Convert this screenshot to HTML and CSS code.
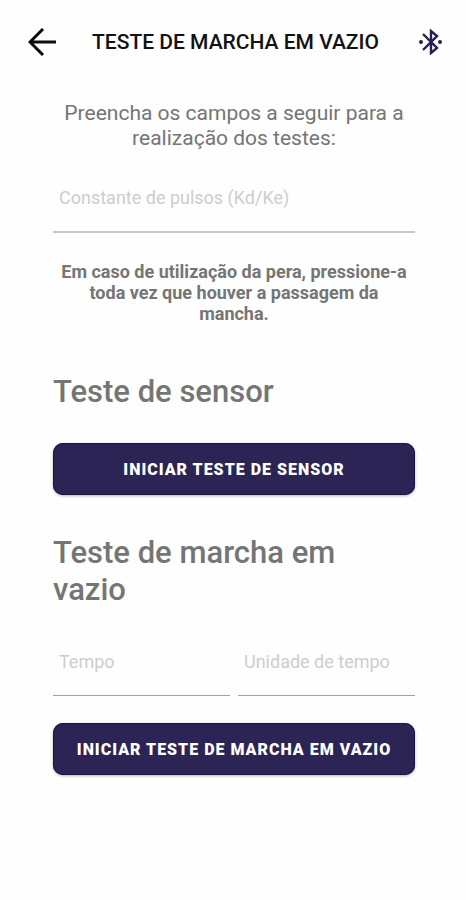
FILE: index.html
```html
<!DOCTYPE html>
<html lang="pt-BR">
<head>
<meta charset="utf-8">
<meta name="viewport" content="width=device-width, initial-scale=1">
<title>Teste de marcha em vazio</title>
<link rel="stylesheet" href="styles.css">
</head>
<body>
<header class="topbar">
  <button class="icon-button" type="button" aria-label="Voltar">
    <svg class="icon-back" viewBox="0 0 28 28" aria-hidden="true"><path d="M28 14H2M15 1 2 14l13 13"/></svg>
  </button>
  <h1 class="title">TESTE DE MARCHA EM VAZIO</h1>
  <button class="icon-button" type="button" aria-label="Bluetooth">
    <svg class="icon-bluetooth" viewBox="0 0 24 26" aria-hidden="true">
      <path d="M4 5 18 19 12 24V2l6 5L4 21"/>
      <circle cx="2" cy="13" r="2"/><circle cx="21" cy="13" r="2"/>
    </svg>
  </button>
</header>
<main>
  <form class="content">
    <p class="intro">Preencha os campos a seguir para a realização dos testes:</p>
    <input class="field field-main" type="text" aria-label="Constante de pulsos (Kd/Ke)" placeholder="Constante de pulsos (Kd/Ke)">
    <p class="notice">Em caso de utilização da pera, pressione-a toda vez que houver a passagem da mancha.</p>
    <section class="test test-sensor">
      <h2 class="heading">Teste de sensor</h2>
      <button class="action" type="button">INICIAR TESTE DE SENSOR</button>
    </section>
    <section class="test test-idle">
      <h2 class="heading">Teste de marcha em vazio</h2>
      <div class="field-row">
        <input class="field" type="text" aria-label="Tempo" placeholder="Tempo">
        <input class="field" type="text" aria-label="Unidade de tempo" placeholder="Unidade de tempo">
      </div>
      <button class="action" type="button">INICIAR TESTE DE MARCHA EM VAZIO</button>
    </section>
  </form>
</main>
</body>
</html>
```
FILE: styles.css
```css
* {
  box-sizing: border-box;
}

body {
  margin: 0;
  background: #fefefe;
  color: #757575;
  font-family: Roboto, sans-serif;
}

h1, h2, p {
  margin: 0;
}

.topbar {
  display: grid;
  grid-template-columns: 1fr auto 1fr;
  align-items: center;
  height: 84px;
  padding: 0 23px 0 28px;
}

.icon-button {
  display: flex;
  justify-self: start;
  padding: 0;
  border: 0;
  background: none;
}

.title + .icon-button {
  justify-self: end;
}

.icon-back {
  width: 28px;
  height: 28px;
  fill: none;
  stroke: #0c0c0c;
  stroke-width: 3;
}

.icon-bluetooth {
  width: 24px;
  height: 26px;
  fill: none;
  stroke: #242052;
  stroke-width: 2.4;
}

.icon-bluetooth circle {
  fill: #242052;
  stroke: none;
}

.title {
  color: #111;
  font-size: 21px;
  font-weight: 500;
  line-height: 28px;
}

.content {
  padding: 17px 51px 40px 53px;
}

.intro {
  font-size: 21px;
  line-height: 25px;
  text-align: center;
}

.field {
  display: block;
  width: 100%;
  min-width: 0;
  height: 69px;
  padding: 0 6px;
  border: 0;
  border-bottom: 1px solid #a0a0a0;
  border-radius: 0;
  background: none;
  color: #555;
  font: 400 18px/24px Roboto, sans-serif;
}

.field-main {
  margin-top: 12px;
  height: 70px;
  border-bottom: 2px solid #c9c9c9;
}

.field::placeholder {
  color: #cdcdcd;
  opacity: 1;
}

.notice {
  margin-top: 28px;
  font-size: 18px;
  font-weight: 700;
  line-height: 21px;
  text-align: center;
}

.test {
  display: flex;
  flex-direction: column;
}

.test-sensor {
  gap: 33px;
  margin-top: 49px;
}

.test-idle {
  gap: 27px;
  margin-top: 39px;
}

.heading {
  font-size: 31px;
  font-weight: 500;
  line-height: 37px;
}

.test-idle .heading {
  padding-right: 48px;
  margin-bottom: -8px;
}

.action {
  min-height: 52px;
  padding: 2px 16px 0;
  border: 0;
  border-radius: 10px;
  background: #2b2454;
  box-shadow: inset 0 0 0 1px #1b1448, 0 1px 3px #0000004d;
  color: #fff;
  font: 900 16px/20px Roboto, sans-serif;
  letter-spacing: 1px;
}

.field-row {
  display: grid;
  grid-template-columns: 1fr 1fr;
  gap: 8px;
}
```
